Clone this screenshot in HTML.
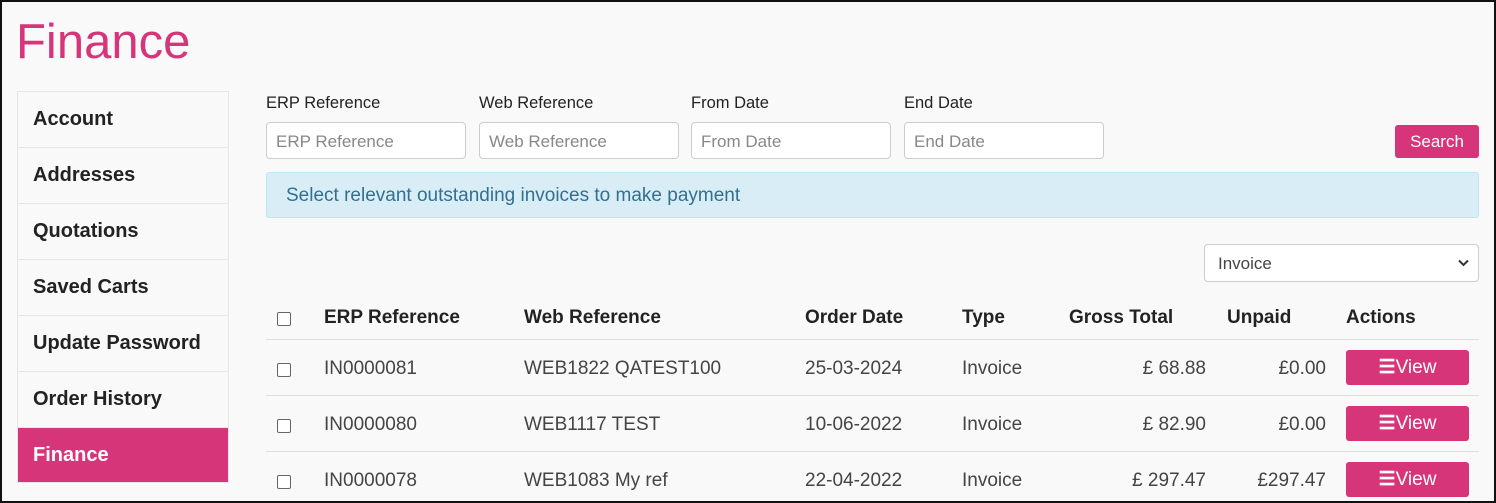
<!DOCTYPE html><html><head><style>
*{box-sizing:border-box;margin:0;padding:0}
body{width:1496px;height:503px;overflow:hidden;background:#f9f9f9;font-family:"Liberation Sans",sans-serif;color:#333;position:relative}
.frame{position:absolute;left:0;top:0;width:1496px;height:503px;border:2px solid #111;pointer-events:none}
.a{position:absolute}
h1{position:absolute;left:16px;top:14px;font-size:49px;font-weight:400;color:#d6357a}
.nav{position:absolute;left:17px;top:91px;width:212px;border:1px solid #e6e6e6;border-bottom:none}
.nav div{height:56px;line-height:55px;padding-left:15px;font-weight:bold;font-size:20px;color:#222;border-bottom:1px solid #e6e6e6}
.nav .on{background:#d6357a;color:#fff;height:55px}
.lbl{font-size:16.5px;color:#222;top:94px}
.in{top:122px;width:200px;height:37px;border:1px solid #ccc;border-radius:4px;background:#fff;font-size:17px;color:#888;padding:9px 0 0 9px}
.btn{background:#d6357a;color:#fff;border-radius:3px;text-align:center}
.th{top:307px;font-weight:bold;font-size:19px;color:#222}
.td{font-size:19px;color:#444}
.cb{width:14px;height:14px;border:1px solid #666;border-radius:2px;background:#fff}
.ln{left:266px;width:1213px;height:1px;background:#ddd}
</style></head><body>
<h1>Finance</h1>
<div class="nav"><div>Account</div><div>Addresses</div><div>Quotations</div><div>Saved Carts</div><div>Update Password</div><div>Order History</div><div class="on">Finance</div></div>
<div class="a lbl" style="left:266px">ERP Reference</div>
<div class="a lbl" style="left:479px">Web Reference</div>
<div class="a lbl" style="left:691px">From Date</div>
<div class="a lbl" style="left:904px">End Date</div>
<div class="a in" style="left:266px">ERP Reference</div>
<div class="a in" style="left:479px">Web Reference</div>
<div class="a in" style="left:691px">From Date</div>
<div class="a in" style="left:904px">End Date</div>
<div class="a btn" style="left:1395px;top:125px;width:84px;height:33px;line-height:33px;font-size:17px">Search</div>
<div class="a" style="left:266px;top:172px;width:1213px;height:46px;background:#d9edf7;border:1px solid #bce8f1;border-radius:3px;color:#31708f;font-size:19px;padding:12px 0 0 19px">Select relevant outstanding invoices to make payment</div>
<div class="a" style="left:1204px;top:244px;width:275px;height:38px;background:#fff;border:1px solid #ccc;border-radius:4px;font-size:17px;color:#444;padding:9px 0 0 13px">Invoice<svg class="a" style="right:9px;top:14px" width="11" height="8" viewBox="0 0 11 8"><path d="M1 1.5l4.5 4.5 4.5-4.5" fill="none" stroke="#333" stroke-width="2"/></svg></div>
<div class="a cb" style="left:277px;top:312px"></div>
<div class="a th" style="left:324px">ERP Reference</div>
<div class="a th" style="left:524px">Web Reference</div>
<div class="a th" style="left:805px">Order Date</div>
<div class="a th" style="left:962px">Type</div>
<div class="a th" style="left:1069px">Gross Total</div>
<div class="a th" style="left:1227px">Unpaid</div>
<div class="a th" style="left:1346px">Actions</div>
<div class="a ln" style="top:339px"></div><div class="a ln" style="top:395px"></div><div class="a ln" style="top:451px"></div>
<div class="a" style="left:0;top:358px;width:1496px">
<div class="a cb" style="left:277px;top:5px"></div><div class="a td" style="left:324px">IN0000081</div><div class="a td" style="left:524px">WEB1822 QATEST100</div><div class="a td" style="left:805px">25-03-2024</div><div class="a td" style="left:962px">Invoice</div><div class="a td" style="right:290px">£ 68.88</div><div class="a td" style="right:170px">£0.00</div>
<div class="a btn" style="left:1346px;top:-8px;width:123px;height:35px;line-height:35px;font-size:19px"><b>&#9776;</b>View</div></div>
<div class="a" style="left:0;top:414px;width:1496px">
<div class="a cb" style="left:277px;top:5px"></div><div class="a td" style="left:324px">IN0000080</div><div class="a td" style="left:524px">WEB1117 TEST</div><div class="a td" style="left:805px">10-06-2022</div><div class="a td" style="left:962px">Invoice</div><div class="a td" style="right:290px">£ 82.90</div><div class="a td" style="right:170px">£0.00</div>
<div class="a btn" style="left:1346px;top:-8px;width:123px;height:35px;line-height:35px;font-size:19px"><b>&#9776;</b>View</div></div>
<div class="a" style="left:0;top:470px;width:1496px">
<div class="a cb" style="left:277px;top:5px"></div><div class="a td" style="left:324px">IN0000078</div><div class="a td" style="left:524px">WEB1083 My ref</div><div class="a td" style="left:805px">22-04-2022</div><div class="a td" style="left:962px">Invoice</div><div class="a td" style="right:290px">£ 297.47</div><div class="a td" style="right:170px">£297.47</div>
<div class="a btn" style="left:1346px;top:-8px;width:123px;height:35px;line-height:35px;font-size:19px"><b>&#9776;</b>View</div></div>
<div class="frame"></div>
</body></html>
